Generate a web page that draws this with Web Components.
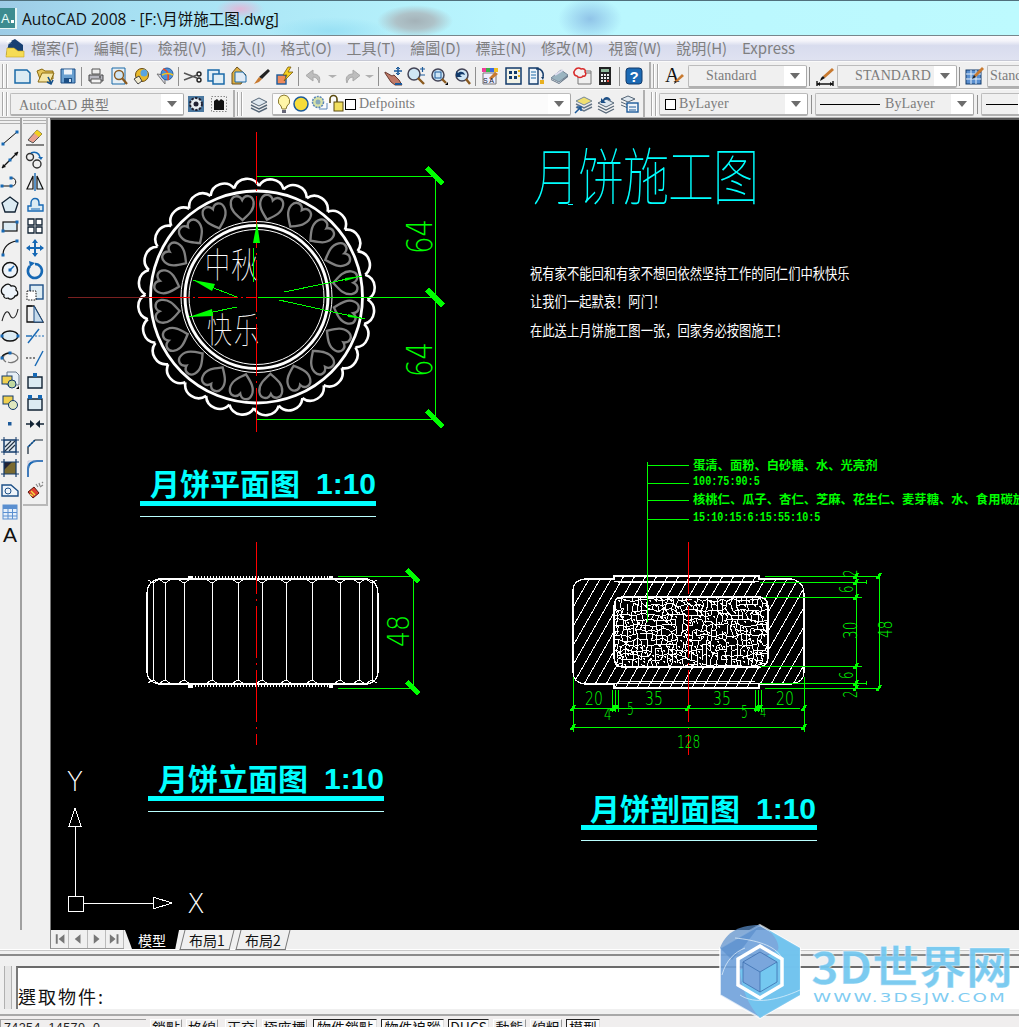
<!DOCTYPE html>
<html>
<head>
<meta charset="utf-8">
<title>AutoCAD 2008</title>
<style>
  html, body { margin: 0; height: 100%; overflow: hidden; background: #f0f0f0; }
</style>
</head>
<body>
<cad-app>
  <cad-titlebar>AutoCAD 2008 - [F:\月饼施工图.dwg]</cad-titlebar>
  <cad-menubar>
    <cad-menu>檔案(F)</cad-menu><cad-menu>編輯(E)</cad-menu><cad-menu>檢視(V)</cad-menu><cad-menu>插入(I)</cad-menu>
    <cad-menu>格式(O)</cad-menu><cad-menu>工具(T)</cad-menu><cad-menu>繪圖(D)</cad-menu><cad-menu>標註(N)</cad-menu>
    <cad-menu>修改(M)</cad-menu><cad-menu>視窗(W)</cad-menu><cad-menu>說明(H)</cad-menu><cad-menu>Express</cad-menu>
  </cad-menubar>
  <cad-toolbar pad="2">
    <tool-grip></tool-grip>
    <tool-icon name="new"></tool-icon><tool-icon name="open"></tool-icon><tool-icon name="save"></tool-icon><tool-sep></tool-sep>
    <tool-icon name="print"></tool-icon><tool-icon name="preview"></tool-icon><tool-icon name="publish"></tool-icon><tool-icon name="dwf"></tool-icon><tool-sep></tool-sep>
    <tool-icon name="cut"></tool-icon><tool-icon name="copy"></tool-icon><tool-icon name="paste"></tool-icon><tool-icon name="match"></tool-icon><tool-icon name="block"></tool-icon><tool-sep></tool-sep>
    <tool-icon name="undo" w="26"></tool-icon><tool-icon name="caret" w="12"></tool-icon><tool-icon name="redo" w="25"></tool-icon><tool-icon name="caret" w="12"></tool-icon><tool-sep></tool-sep>
    <tool-icon name="pan"></tool-icon><tool-icon name="zoomrt"></tool-icon><tool-icon name="zoomwin"></tool-icon><tool-icon name="zoomprev"></tool-icon><tool-sep></tool-sep>
    <tool-icon name="props"></tool-icon><tool-icon name="center"></tool-icon><tool-icon name="palette"></tool-icon><tool-icon name="sheet"></tool-icon><tool-icon name="markup"></tool-icon><tool-icon name="calc"></tool-icon><tool-sep w="6"></tool-sep>
    <tool-icon name="help" w="24"></tool-icon><tool-end></tool-end><tool-grip></tool-grip>
    <tool-icon name="textstyle" w="26"></tool-icon>
    <tool-combo w="119" pad="17" style="margin-left:1px">Standard</tool-combo><tool-sep></tool-sep>
    <tool-icon name="dimstyle" w="25"></tool-icon>
    <tool-combo w="120" pad="17">STANDARD</tool-combo><tool-sep w="4"></tool-sep>
    <tool-icon name="tablestyle" w="26"></tool-icon>
    <tool-combo w="60" pad="2">Standard</tool-combo>
  </cad-toolbar>
  <cad-toolbar h="29">
    <tool-grip></tool-grip>
    <tool-combo w="174">AutoCAD 典型</tool-combo>
    <tool-icon name="gear"></tool-icon><tool-icon name="wsblack"></tool-icon><tool-end></tool-end><tool-grip></tool-grip>
    <tool-icon name="layers" w="27"></tool-icon>
    <tool-combo w="299" light pad="3">
      <tool-icon name="bulb" w="16"></tool-icon><tool-icon name="sun" w="17"></tool-icon><tool-icon name="freeze" w="19"></tool-icon><tool-icon name="lock" w="17"></tool-icon><tool-swatch></tool-swatch>Defpoints
    </tool-combo>
    <tool-icon name="laymake"></tool-icon><tool-icon name="layprev"></tool-icon><tool-icon name="laystate"></tool-icon><tool-end></tool-end><tool-grip w="14"></tool-grip>
    <tool-combo w="149" pad="5"><tool-swatch></tool-swatch>ByLayer</tool-combo><tool-sep w="7"></tool-sep>
    <tool-combo w="159"><tool-rule len="60"></tool-rule>ByLayer</tool-combo><tool-sep w="7"></tool-sep>
    <tool-combo w="60"><tool-rule len="40"></tool-rule></tool-combo>
  </cad-toolbar>
  <cad-workspace>
    <cad-vbar slot="left">
      <tool-icon h="22" name="l_line"></tool-icon><tool-icon h="22" name="l_xline"></tool-icon><tool-icon h="22" name="l_pline"></tool-icon><tool-icon h="22" name="l_polygon"></tool-icon><tool-icon h="22" name="l_rect"></tool-icon>
      <tool-icon h="22" name="l_arc"></tool-icon><tool-icon h="22" name="l_circle"></tool-icon><tool-icon h="22" name="l_cloud"></tool-icon><tool-icon h="22" name="l_spline"></tool-icon><tool-icon h="22" name="l_ellipse"></tool-icon>
      <tool-icon h="22" name="l_ellarc"></tool-icon><tool-icon h="22" name="l_insert"></tool-icon><tool-icon h="22" name="l_mkblock"></tool-icon><tool-icon h="22" name="l_point"></tool-icon><tool-icon h="22" name="l_hatch"></tool-icon>
      <tool-icon h="22" name="l_gradient"></tool-icon><tool-icon h="22" name="l_region"></tool-icon><tool-icon h="22" name="l_table"></tool-icon><tool-icon h="22" name="l_text"></tool-icon>
    </cad-vbar>
    <cad-vbar slot="left" boxed>
      <tool-icon h="22" name="m_erase"></tool-icon><tool-icon h="22" name="m_copy"></tool-icon><tool-icon h="22" name="m_mirror"></tool-icon><tool-icon h="22" name="m_offset"></tool-icon><tool-icon h="22" name="m_array"></tool-icon>
      <tool-icon h="22" name="m_move"></tool-icon><tool-icon h="22" name="m_rotate"></tool-icon><tool-icon h="22" name="m_scale"></tool-icon><tool-icon h="22" name="m_stretch"></tool-icon><tool-icon h="22" name="m_trim"></tool-icon>
      <tool-icon h="22" name="m_extend"></tool-icon><tool-icon h="22" name="m_breakpt"></tool-icon><tool-icon h="22" name="m_break"></tool-icon><tool-icon h="22" name="m_join"></tool-icon><tool-icon h="22" name="m_chamfer"></tool-icon>
      <tool-icon h="22" name="m_fillet"></tool-icon><tool-icon h="22" name="m_explode"></tool-icon>
    </cad-vbar>
    <cad-drawing></cad-drawing>
  </cad-workspace>
  <cad-tabs>
    <cad-tab active>模型</cad-tab><cad-tab>布局1</cad-tab><cad-tab>布局2</cad-tab>
  </cad-tabs>
  <cad-command>選取物件:</cad-command>
  <cad-status coords="74254, 14570, 0">
    <cad-toggle w="32">鎖點</cad-toggle><cad-toggle w="32">格線</cad-toggle><cad-toggle w="32" style="margin-left:3px">正交</cad-toggle><cad-toggle w="45" style="margin-left:1px">極座標</cad-toggle>
    <cad-toggle w="64" on style="margin-left:2px">物件鎖點</cad-toggle><cad-toggle w="63" on>物件追蹤</cad-toggle><cad-toggle w="41" on>DUCS</cad-toggle>
    <cad-toggle w="33">動態</cad-toggle><cad-toggle w="32">線粗</cad-toggle><cad-toggle w="34" on>模型</cad-toggle>
  </cad-status>
  <cad-watermark></cad-watermark>
</cad-app>

<script>
const CJK = '"Noto Sans CJK TC", "Noto Sans CJK SC", sans-serif';
const BL = "#1668b4";

// 20x20 toolbar icons, stroke look follows the AutoCAD 2008 set
const nodes = (pts) => pts.map(([x, y]) => `<rect x="${x - 1.5}" y="${y - 1.5}" width="3" height="3" fill="${BL}"/>`).join("");
const ICONS = {
  new: `<path d="M3 4h12l3 3v10H3z" fill="#dcebf3" stroke="#1a6aa8" stroke-width="1.5"/>`,
  open: `<path d="M2 5l5-2 3 2h8v8H5z" fill="#e6c55a" stroke="#8a6a10"/><path d="M3 16l4-9h12l-4 9z" fill="#f5e6a6" stroke="#8a6a10"/><path d="M13 11l3 6m-4-1 4 2 2-4" stroke="#134f8a" stroke-width="1.6" fill="none"/>`,
  save: `<path d="M3 3h14v14H3z" fill="#6aa0d0" stroke="#1c4f86"/><rect x="6" y="3.5" width="8" height="5" fill="#eef4fa"/><rect x="6" y="12" width="8" height="5" fill="#1c4f86"/><rect x="11" y="13" width="2" height="3" fill="#cfe0f0"/>`,
  print: `<path d="M6 3h8v5H6z" fill="#eee" stroke="#555"/><path d="M3 9h14v6H3z" fill="#b8b8c0" stroke="#444"/><path d="M5 13h10v4H5z" fill="#f4f4f4" stroke="#555"/><circle cx="14" cy="11" r="1" fill="#555"/>`,
  preview: `<path d="M3 2h13v16H3z" fill="#e6eff5" stroke="#1a6aa8"/><circle cx="10" cy="9" r="4.5" fill="#cfe6f5" stroke="#8a5a20" stroke-width="1.4"/><path d="M13 12l5 6" stroke="#8a5a20" stroke-width="2.2"/>`,
  publish: `<circle cx="10" cy="9" r="6.5" fill="#e8b92a" stroke="#6a4a10"/><circle cx="12" cy="7" r="3.5" fill="#5aa5e0"/><path d="M2 13l5-3 3 5-4 3z" fill="#f0ead0" stroke="#444"/>`,
  dwf: `<path d="M2 8l8 10V9z" fill="#d8d8e4" stroke="#777"/><circle cx="12" cy="8" r="6" fill="#4a90d8" stroke="#2a5a9a"/><path d="M8 3c4 1 6 5 5 11" stroke="#e84a2a" stroke-width="1.6" fill="none"/><path d="M7 9c3-2 8-2 11 0" stroke="#f2c420" stroke-width="1.6" fill="none"/>`,
  cut: `<circle cx="16" cy="8" r="2" fill="none" stroke="#222" stroke-width="1.4"/><circle cx="16" cy="14" r="2" fill="none" stroke="#222" stroke-width="1.4"/><path d="M1 7l13 5M1 14l13-5" stroke="#555" stroke-width="1.4"/>`,
  copy: `<path d="M2 4h11v11H2z" fill="#e0eef5" stroke="#1a6aa8" stroke-width="1.5"/><path d="M7 8h11v10H7z" fill="#e0eef5" stroke="#1a6aa8" stroke-width="1.5"/>`,
  paste: `<path d="M8 1l9 8-5 9H3V7z" fill="#e0b040" stroke="#6a5020"/><path d="M6 6h8l3 4v6H6z" fill="#dfeaf5" stroke="#1a6aa8"/>`,
  match: `<path d="M16 3l2 2-8 8-3-2z" fill="#222"/><path d="M7 11l3 2-3 3-5 2z" fill="#c87a30"/>`,
  block: `<rect x="2" y="9" width="9" height="9" fill="#ef8a5a" stroke="#1a5a9a" stroke-width="1.4"/><path d="M13 1l-5 8h4l-3 6 9-9h-5l3-5z" fill="#f4d020" stroke="#7a5a10" stroke-width=".8"/>`,
  undo: `<path d="M15 17c2-5 0-9-6-9V4L2 9.500l7 5.500v-4c3 0 5 2 6 5.500z" fill="#bdbdbd" stroke="#a8a8a8"/>`,
  redo: `<path d="M5 17c-2-5 0-9 6-9V4l7 5.500-7 5.500v-4c-3 0-5 2-6 5.500z" fill="#bdbdbd" stroke="#a8a8a8"/>`,
  caret: `<path d="M5 9h9l-4.500 3z" fill="#b0b0b0"/>`,
  pan: `<path d="M2 6l7 4 2-1 5 5 3 5h-7l-4-3-6-9z" fill="#c07a68" stroke="#6a3a30"/><path d="M12 17h7v2h-7z" fill="#1c5a9a"/><path d="M15 1v8M11 5h8" stroke="#1c5a9a" stroke-width="1.6"/><path d="M13 3l2-2 2 2M13 7l2 2 2-2" stroke="#1c5a9a" fill="none"/>`,
  zoomrt: `<circle cx="8" cy="8" r="6" fill="#cfe6f5" stroke="#445" stroke-width="1.5"/><path d="M12 12l6 6" stroke="#8a5a20" stroke-width="2.4"/><path d="M14 3h5M16.500 1v5M14 9h5" stroke="#1c5a9a" stroke-width="1.2"/>`,
  zoomwin: `<circle cx="9" cy="9" r="6" fill="#cfe6f5" stroke="#445" stroke-width="1.5"/><rect x="6" y="6" width="6" height="6" fill="none" stroke="#1c5a9a"/><path d="M13 13l4 4" stroke="#8a5a20" stroke-width="2.4"/><path d="M16 19l3-3v3z" fill="#000"/>`,
  zoomprev: `<circle cx="10" cy="9" r="6" fill="#cfe6f5" stroke="#445" stroke-width="1.5"/><path d="M14 13l4 5" stroke="#8a5a20" stroke-width="2.400"/><path d="M13 9C12 5 8 5 6 7L4 5v6h6L8 9c1-1 3-1 5 0z" fill="#123a6a"/>`,
  props: `<path d="M2 2h15v4H2z" fill="#f03a9a"/><path d="M6 2h4v4H6z" fill="#3ab04a"/><path d="M10 2h4v4h-4z" fill="#3a6ae0"/><path d="M14 2h4v4h-4z" fill="#f0c020"/><path d="M3 7h13v11H3z" fill="#eef" stroke="#777"/><path d="M15 6l3 2-7 6-2-2z" fill="#c87a30"/><text x="3" y="17" font-size="7" font-family="Liberation Sans" fill="#123">S A</text>`,
  center: `<rect x="3" y="2" width="15" height="16" fill="#f2f2e6" stroke="#123a6a" stroke-width="1.5"/><path d="M6 5h3v3H6zM11 5h3v3h-3zM6 10h3v3H6zM11 10h3v3h-3z" fill="#123a6a"/><path d="M15 5h2M15 10h2" stroke="#e0b020" stroke-width="2"/>`,
  palette: `<path d="M3 2h9v16H3z" fill="#eef4fa" stroke="#123a6a" stroke-width="1.400"/><path d="M5 6h5M5 9h5M5 12h5" stroke="#1a6aa8"/><path d="M10 3c5-1 8 3 7 8" fill="none" stroke="#123a6a" stroke-width="1.500"/><path d="M15 11l3 0-1 3z" fill="#123a6a"/><rect x="14" y="14" width="4" height="4" fill="#e8b020"/>`,
  sheet: `<path d="M2 12L12 4l7 5-9 7z" fill="#9ab4c0" stroke="#789"/><path d="M2 13l8 4 9-8v2l-9 7-8-4z" fill="#678"/><path d="M6 9l8-5" stroke="#dde" stroke-width="2"/>`,
  markup: `<path d="M6 5h13v13H6z" fill="none" stroke="#777"/><path d="M8 7h11" stroke="#777"/><path d="M3 4c2-3 5-2 6-1 3-1 5 1 4 3 2 2 0 5-2 4-1 2-5 2-6 0-3 0-4-4-2-6z" fill="#f4f2f2" stroke="#d82a2a" stroke-width="1.500"/>`,
  calc: `<rect x="4" y="1" width="12" height="18" fill="#222"/><rect x="6" y="3" width="8" height="3" fill="#8fb89a"/><path d="M6 8h2v2H6zM9 8h2v2H9zM12 8h2v2h-2zM6 11h2v2H6zM9 11h2v2H9zM12 11h2v2h-2zM6 14h2v2H6zM9 14h2v2H9z" fill="#eee"/><path d="M12 14h2v2h-2z" fill="#e04030"/>`,
  help: `<rect x="2" y="2" width="16" height="16" rx="3" fill="#1c6ab4" stroke="#123a6a"/><text x="10" y="16" text-anchor="middle" font-family="Liberation Sans" font-weight="700" font-size="15" fill="#fff">?</text>`,
  textstyle: `<text x="1" y="16" font-family="Liberation Serif" font-size="20" fill="#111">A</text><path d="M18 8l2 2-7 6-2-1z" fill="#c87a30"/><path d="M11 15l2 1-3 2z" fill="#222"/>`,
  dimstyle: `<path d="M2 18h16M2 15v5M18 15v5" stroke="#111" stroke-width="1.400"/><path d="M2 18l3-2v4zM18 18l-3-2v4z" fill="#111"/><path d="M17 2l2 2-9 8-2-2z" fill="#c87a30"/><path d="M8 10l2 2-5 3 1-3z" fill="#111"/>`,
  tablestyle: `<rect x="2" y="4" width="15" height="14" fill="#5a8fd0" stroke="#123a6a"/><path d="M2 8h15M2 13h15M7 4v14M12 4v14" stroke="#e6f0fa"/><path d="M18 1l2 2-8 8-2-2z" fill="#c87a30"/><path d="M10 9l2 2-4 2z" fill="#222"/>`,
  gear: `<rect x="2" y="2" width="16" height="16" fill="#4a78a0"/><circle cx="10" cy="10" r="6" fill="#e8eef2" stroke="#223" stroke-width="2" stroke-dasharray="2.400 1.400"/><circle cx="10" cy="10" r="2.500" fill="#223"/>`,
  wsblack: `<rect x="2.500" y="2.500" width="15" height="15" fill="none" stroke="#888" stroke-dasharray="1.500 1.500"/><path d="M5 7l3-2 2 2 2-2 3 2v9H5z" fill="#111"/>`,
  layers: `<path d="M10 4l8 4-8 4-8-4z" fill="#dfe8f0" stroke="#567"/><path d="M2 11l8 4 8-4" fill="none" stroke="#567" stroke-width="1.400"/><path d="M2 14l8 4 8-4" fill="none" stroke="#567" stroke-width="1.400"/>`,
  bulb: `<path d="M8 1a6 6 0 0 1 3 11l-1 3H6l-1-3A6 6 0 0 1 8 1z" transform="translate(2 0)" fill="#fff6a8" stroke="#8a7a30"/><path d="M8 16h4v3H8z" fill="#667"/>`,
  sun: `<circle cx="10" cy="10" r="7" fill="#f6dc3a" stroke="#1c5a9a" stroke-width="1.500"/>`,
  freeze: `<circle cx="9" cy="8" r="5.500" fill="#d8e2a8" stroke="#5a86b8" stroke-width="1.500" stroke-dasharray="2 1"/><circle cx="9" cy="8" r="2.500" fill="#8ab"/><path d="M10 15h8V9" fill="none" stroke="#5a86b8"/>`,
  lock: `<path d="M3 9V5a3.500 3.500 0 0 1 7 0v4" fill="none" stroke="#5a4a10" stroke-width="1.600"/><rect x="7" y="8" width="9" height="9" fill="#f2e060" stroke="#5a4a10"/>`,
  laymake: `<path d="M11 3l8 4-8 4-8-4z" fill="#f0e070" stroke="#789"/><path d="M3 10l8 4 8-4M3 13l8 4 8-4" fill="none" stroke="#678" stroke-width="1.400"/><path d="M2 19l6-6M4 13h4v4" stroke="#1c5a9a" fill="none" stroke-width="1.500"/>`,
  layprev: `<path d="M10 5l8 4-8 4-8-4z" fill="#dfe8f0" stroke="#567"/><path d="M2 12l8 4 8-4M2 15l8 4 8-4" fill="none" stroke="#567" stroke-width="1.200"/><path d="M15 7C14 2 8 2 7 6L5 4v5h5L8 7c1-2 4-2 7 0z" fill="#1c4f86"/>`,
  laystate: `<path d="M9 2l7 3-7 3-7-3z" fill="#dfe8f0" stroke="#567"/><path d="M2 8l7 3M2 11l7 3" stroke="#567" fill="none"/><rect x="8" y="9" width="11" height="9" fill="#eef4fa" stroke="#1c5a9a" stroke-width="1.400"/><path d="M10 13h7M10 16h7" stroke="#1c5a9a"/>`,

  l_line: `<path d="M3 16L17 4" stroke="#111"/>${nodes([[3, 16], [17, 4]])}`,
  l_xline: `<path d="M2 18L18 2" stroke="#111" stroke-width="1.200"/><path d="M2 18l1-4 3 3zM18 2l-1 4-3-3z" fill="#111"/>${nodes([[10, 10]])}`,
  l_pline: `<path d="M2 14h10c5 0 5-8 0-8" fill="none" stroke="#111"/>${nodes([[2, 14], [11, 14], [11, 6]])}`,
  l_polygon: `<path d="M10 3l8 6-3 9H5L2 9z" fill="#dcebf3" stroke="#123" stroke-width="1.300"/>`,
  l_rect: `<rect x="3" y="6" width="14" height="9" fill="#dcebf3" stroke="#111" stroke-width="1.200"/>${nodes([[3, 15], [17, 6]])}`,
  l_arc: `<path d="M3 17C3 9 9 4 17 3" fill="none" stroke="#111" stroke-width="1.200"/>${nodes([[3, 17], [17, 3]])}`,
  l_circle: `<circle cx="10" cy="10" r="7.500" fill="#eef4fa" stroke="#111" stroke-width="1.400"/><path d="M10 10l4-4" stroke="#1668b4" stroke-width="1.400"/>${nodes([[10, 10]])}`,
  l_cloud: `<path d="M4 4c3-3 6-2 7 0 4-1 6 2 5 4 3 2 2 6-1 6-1 3-5 4-7 2-3 1-5-1-4-3-3-1-4-6 0-9z" fill="#eef4fa" stroke="#111" stroke-width="1.300"/>`,
  l_spline: `<path d="M2 17C5 6 8 6 10 11s6 4 8-6" fill="none" stroke="#222" stroke-width="1.100"/>`,
  l_ellipse: `<ellipse cx="10" cy="10" rx="8" ry="5" fill="#dcebf3" stroke="#111" stroke-width="1.400"/>${nodes([[2, 10], [18, 10]])}`,
  l_ellarc: `<path d="M6 14C0 10 5 5 10 5s10 4 7 7-7 3-9 2" fill="none" stroke="#777" stroke-width="1.300"/><path d="M2 11C1 7 6 5 10 5" fill="none" stroke="#111" stroke-width="1.300"/>${nodes([[2, 10], [10, 5]])}`,
  l_insert: `<path d="M7 2h9l3 3v10H7z" fill="#e6eef5" stroke="#678"/><rect x="2" y="6" width="10" height="8" fill="#f0d050" stroke="#123a6a"/><circle cx="12" cy="14" r="4" fill="#c0d8a0" stroke="#123a6a"/><path d="M16 19l3-3v3z" fill="#000"/>`,
  l_mkblock: `<rect x="3" y="4" width="10" height="8" fill="#f0d050" stroke="#123a6a"/><circle cx="13" cy="13" r="4.500" fill="#dfe8c0" stroke="#123a6a"/>`,
  l_point: `<rect x="8" y="8" width="3.500" height="3.500" fill="#1c5a9a"/>`,
  l_hatch: `<rect x="4" y="4" width="12" height="12" fill="#dfe8f0" stroke="#123a6a"/><path d="M5 11l6-6M5 15l10-10M9 15l6-6" stroke="#234" stroke-width="1.200"/><path d="M1 4h18M1 16h18M4 1v18M16 1v18" stroke="#123a6a"/>`,
  l_gradient: `<rect x="4" y="4" width="12" height="12" fill="#7a6a30"/><path d="M4 4h8L4 12z" fill="#223"/><path d="M1 4h18M1 16h18M4 1v18M16 1v18" stroke="#123a6a" stroke-width="1.200"/>`,
  l_region: `<path d="M2 5h9l7 6v5H2z" fill="#eef4fa" stroke="#1c4f86" stroke-width="1.400"/><circle cx="8" cy="11" r="3" fill="none" stroke="#1c4f86"/>`,
  l_table: `<rect x="3" y="3" width="14" height="14" fill="#e6f0fa" stroke="#5a8fd0"/><path d="M3 3h14v4H3z" fill="#5a8fd0"/><path d="M3 10.500h14M3 14h14M8 7v10M12.500 7v10" stroke="#5a8fd0"/>`,
  l_text: `<text x="10" y="18" text-anchor="middle" font-family="Liberation Sans" font-size="21" fill="#111">A</text>`,

  m_erase: `<path d="M12 2l5 4-9 9-5-3z" fill="#e8a090" stroke="#555"/><path d="M12 2l5 4-3 3-5-4z" fill="#f2d020"/><path d="M1 17h18" stroke="#111"/>`,
  m_copy: `<circle cx="5" cy="7" r="3.500" fill="none" stroke="#333" stroke-width="1.400"/><circle cx="12" cy="14" r="4" fill="none" stroke="#333" stroke-width="1.400"/><path d="M6 3c4-2 8 0 9 4" fill="none" stroke="#1668b4" stroke-width="1.400"/><path d="M13 7h5l-2 3z" fill="#1668b4"/>`,
  m_mirror: `<path d="M10 1v18" stroke="#1668b4" stroke-width="1.400"/><path d="M8 4v13H2z" fill="none" stroke="#111" stroke-width="1.200"/><path d="M12 4v13h6z" fill="#dcebf3" stroke="#111" stroke-width="1.200"/>`,
  m_offset: `<path d="M3 17v-5h3V9c0-6 8-6 8 0v2h4v6z" fill="#dcebf3" stroke="#1668b4" stroke-width="1.400"/><path d="M6 15h9" stroke="#1668b4"/>`,
  m_array: `<path d="M3 3h6v6H3zM11 3h6v6h-6zM3 11h6v6H3zM11 11h6v6h-6z" fill="#fff" stroke="#123" stroke-width="1.300"/>`,
  m_move: `<path d="M10 2v16M2 10h16" stroke="#1668b4" stroke-width="2"/><path d="M10 1l3 4H7zM10 19l3-4H7zM1 10l4-3v6zM19 10l-4-3v6z" fill="#1668b4"/>`,
  m_rotate: `<path d="M5 6a7 7 0 1 0 5-2" fill="none" stroke="#1668b4" stroke-width="2.600"/><path d="M4 1l6 2-5 4z" fill="#1668b4"/>`,
  m_scale: `<rect x="5" y="3" width="13" height="14" fill="#dcebf3" stroke="#1c4f86" stroke-width="1.400"/><path d="M2 9h9v9H2z" fill="#fff" stroke="#111" stroke-dasharray="1.500 1.200"/>`,
  m_stretch: `<path d="M2 2h7l9 16H2z" fill="none" stroke="#111" stroke-width="1.300"/><path d="M9 2l9 16H9z" fill="#c8dcec" stroke="#1c4f86"/><path d="M2 2h5M2 6" stroke="#111"/>`,
  m_trim: `<path d="M3 17L14 3" stroke="#1668b4" stroke-width="1.400"/><path d="M1 10h6" stroke="#1668b4" stroke-width="1.400"/><path d="M10 10h9" stroke="#1668b4" stroke-dasharray="2 1.500"/>`,
  m_extend: `<path d="M10 18L18 3" stroke="#1668b4" stroke-width="1.400"/><path d="M1 10h9" stroke="#111" stroke-dasharray="2 1.500"/>`,
  m_breakpt: `<path d="M3 18V7h14v11z" fill="#dcebf3" stroke="#123" stroke-width="1.400"/><rect x="8" y="3" width="4" height="4" fill="#1668b4"/>`,
  m_break: `<path d="M3 18V7h14v11z" fill="#dcebf3" stroke="#123" stroke-width="1.400"/><rect x="3" y="3" width="4" height="4" fill="#1668b4"/><rect x="13" y="3" width="4" height="4" fill="#1668b4"/>`,
  m_join: `<path d="M1 10h6M13 10h6" stroke="#123" stroke-width="1.600"/><path d="M9.500 10L5 6v8zM10.500 10L15 6v8z" fill="#123"/>`,
  m_chamfer: `<path d="M3 18V11l7-7h8" fill="none" stroke="#123" stroke-width="1.200"/><path d="M3 11l7-7" stroke="#1668b4" stroke-width="1.600" stroke-dasharray="1.500 1"/>`,
  m_fillet: `<path d="M3 19V11c0-5 4-8 9-8h6" fill="none" stroke="#1668b4" stroke-width="2"/><path d="M3 19V3h15" fill="none" stroke="#aac" stroke-width=".6"/>`,
  m_explode: `<path d="M3 12l6-5 5 6-6 5z" fill="#e04030" stroke="#5a1a10"/><path d="M5 14l3 2M6 11l4 4" stroke="#f0e040" stroke-width="1.400"/><path d="M14 3l1 3M18 5l-3 2M11 4l2 3M18 2l-1 1" stroke="#888" stroke-width="1.200"/>`,
};

class CadApp extends HTMLElement {
  constructor() {
    super();
    this.attachShadow({ mode: "open" }).innerHTML = `
      <style>:host{display:flex;flex-direction:column;position:relative;width:1019px;height:1027px;overflow:hidden;background:#f0f0f0}</style>
      <slot></slot>`;
  }
}

class CadTitlebar extends HTMLElement {
  constructor() {
    super();
    this.attachShadow({ mode: "open" }).innerHTML = `
      <style>
        :host{display:flex;align-items:center;flex:none;height:36px;box-sizing:border-box;border-top:1px solid #50707c;border-bottom:1px solid #77868c;
          background:
            radial-gradient(ellipse 38px 16px at 415px 20px,#a4b2b8 0,#aec2c8 50%,transparent 100%),
            radial-gradient(ellipse 32px 22px at 590px 18px,#90c4e8 0,transparent 100%),
            radial-gradient(ellipse 24px 10px at 240px 8px,#e0b8d8 0,transparent 100%),
            radial-gradient(ellipse 60px 14px at 330px 30px,#98e0f4 0,transparent 100%),
            linear-gradient(90deg,#9dcbe6 0,#a6dff2 120px,#b9f6fe 500px,#bdfafe 100%);
          font:15.500px "Open Sans",${CJK};color:#111}
        svg{width:17px;height:21px;margin-right:5px;flex:none}
      </style>
      <svg viewBox="0 0 17 21"><rect width="17" height="21" fill="#e8f6f4"/><rect x="0" y="0" width="15" height="20" fill="#3d8c90"/><text x="1" y="15" font-family="Liberation Sans" font-size="13" fill="#e8fffc">A</text><rect x="11" y="12" width="3" height="3" fill="#fff"/></svg>
      <slot></slot>`;
  }
}

class CadMenubar extends HTMLElement {
  constructor() {
    super();
    this.attachShadow({ mode: "open" }).innerHTML = `
      <style>
        :host{display:flex;align-items:center;flex:none;height:25px;gap:14.700px;box-sizing:border-box;padding-left:31px;position:relative;
          background:linear-gradient(#fbfbfe 0,#f4f4fa 20%,#d8dcee 40%,#dfe2f1 100%);border-bottom:1px solid #c6c8d4}
        svg{position:absolute;left:5px;top:2px;width:20px;height:20px}
      </style>
      <svg viewBox="0 0 20 20"><path d="M1 17l3-13 6-3 8 6v10z" fill="#173f73"/><path d="M1 19l1-9h7l4 3h6v6z" fill="#f6dc55" stroke="#c9a520" stroke-width=".6"/><path d="M4 1v5M1.500 3.500h5M2.300 1.800l3.400 3.400M5.700 1.800l-3.400 3.400" stroke="#fff"/></svg>
      <slot></slot>`;
  }
}

class CadMenu extends HTMLElement {
  constructor() {
    super();
    this.attachShadow({ mode: "open" }).innerHTML = `
      <style>:host{display:block;font:15px ${CJK};line-height:24px;color:#7f7f80;white-space:nowrap}</style><slot></slot>`;
  }
}

class CadToolbar extends HTMLElement {
  connectedCallback() {
    if (this.shadowRoot) return;
    const h = this.getAttribute("h") || 28;
    const pad = this.getAttribute("pad") || 1;
    this.attachShadow({ mode: "open" }).innerHTML = `
      <style>:host{display:flex;align-items:center;flex:none;height:${h}px;padding-top:${pad}px;overflow:hidden;background:#f0f0f0;box-sizing:border-box;border-bottom:1px solid #b4b4b4;border-top:1px solid #fafafa}</style><slot></slot>`;
  }
}

class ToolIcon extends HTMLElement {
  connectedCallback() {
    const w = this.getAttribute("w") || 23;
    const h = this.getAttribute("h") || 20;
    const name = this.getAttribute("name");
    if (this.shadowRoot) return;
    this.attachShadow({ mode: "open" }).innerHTML = `
      <style>:host{display:flex;align-items:center;justify-content:center;flex:none;width:${w}px;height:${h}px}svg{width:20px;height:20px;overflow:visible;flex:none}</style>
      <svg viewBox="0 0 20 20">${ICONS[name] || ""}</svg>`;
  }
}

class ToolSep extends HTMLElement {
  connectedCallback() {
    if (this.shadowRoot) return;
    const w = this.getAttribute("w") || 5;
    this.attachShadow({ mode: "open" }).innerHTML = `
      <style>:host{display:flex;justify-content:center;flex:none;width:${w}px;height:19px}i{width:1px;background:#8f8f8f}</style><i></i>`;
  }
}

class ToolEnd extends HTMLElement {
  constructor() {
    super();
    this.attachShadow({ mode: "open" }).innerHTML = `
      <style>:host{display:block;flex:none;width:5px;height:28px;box-sizing:border-box;border-right:2px solid #b0b0b0}</style>`;
  }
}

class ToolGrip extends HTMLElement {
  connectedCallback() {
    if (this.shadowRoot) return;
    const w = this.getAttribute("w") || 10;
    this.attachShadow({ mode: "open" }).innerHTML = `
      <style>:host{display:flex;justify-content:flex-end;gap:2px;box-sizing:border-box;padding-right:2px;flex:none;width:${w}px;height:24px}i{width:1px;background:#a8a8a8;border-right:1px solid #fff}</style><i></i><i></i>`;
  }
}

class ToolCombo extends HTMLElement {
  connectedCallback() {
    if (this.shadowRoot) return;
    const w = this.getAttribute("w");
    const pad = this.getAttribute("pad") || 8;
    const light = this.hasAttribute("light");
    this.attachShadow({ mode: "open" }).innerHTML = `
      <style>
        :host{display:flex;flex:none;width:${w}px;height:23px;box-sizing:border-box;border:1px solid #bcbcbc;border-right-color:#a8a8a8;border-bottom:2px solid #b0b0b0;border-radius:2px;background:#fff;overflow:hidden;
          font:14px "Liberation Serif",${CJK};color:#7c7c7c;letter-spacing:.1px}
        .t{flex:1;min-width:0;display:flex;align-items:center;gap:0;white-space:nowrap;overflow:hidden;background:${light ? "#fbfbfb" : "#f0f0f0"};padding-left:${pad}px;padding-top:1px}
        .b{flex:none;width:22px;display:flex;align-items:center;justify-content:center}
        .b svg{width:10px;height:6px}
      </style>
      <span class="t"><slot></slot></span>
      <span class="b"><svg viewBox="0 0 10 6"><path d="M0 0h10L5 6z" fill="#6c6c6c"/></svg></span>`;
  }
}

class ToolSwatch extends HTMLElement {
  constructor() {
    super();
    this.attachShadow({ mode: "open" }).innerHTML = `
      <style>:host{display:block;flex:none;width:9px;height:9px;border:1px solid #000;background:#fff;margin:0 3px 0 0}</style>`;
  }
}

class ToolRule extends HTMLElement {
  connectedCallback() {
    if (this.shadowRoot) return;
    const len = this.getAttribute("len") || 60;
    this.attachShadow({ mode: "open" }).innerHTML = `
      <style>:host{display:block;flex:none;width:${len}px;height:1px;background:#000;margin-right:5px;margin-left:-4px}</style>`;
  }
}

class CadWorkspace extends HTMLElement {
  constructor() {
    super();
    this.attachShadow({ mode: "open" }).innerHTML = `
      <style>
        :host{display:flex;flex:none;height:812px}
        .left{flex:none;width:50px;display:flex;align-items:flex-start;background:#f0f0f0}
      </style>
      <div class="left"><slot name="left"></slot></div>
      <slot></slot>`;
  }
}

class CadVbar extends HTMLElement {
  connectedCallback() {
    if (this.shadowRoot) return;
    const boxed = this.hasAttribute("boxed");
    this.attachShadow({ mode: "open" }).innerHTML = `
      <style>
        :host{display:flex;flex-direction:column;flex:none;box-sizing:border-box;
          ${boxed ? "width:25px;height:388px;margin-left:1px;border-right:2px solid #b8b8b8;border-bottom:2px solid #b8b8b8;align-items:center" : "width:22px;height:812px;border-right:2px solid #a0a0a0;align-items:center"}}
        .g{flex:none;width:100%;height:7px;box-sizing:border-box;margin-top:2px;border-top:1px solid #b0b0b0;position:relative}
        .g::after{content:"";position:absolute;left:0;right:0;top:2px;border-top:1px solid #b0b0b0}
      </style>
      <div class="g"></div><slot></slot>`;
  }
}

// the model space is a free canvas, every entity sits at its own coordinate
class CadDrawing extends HTMLElement {
  constructor() {
    super();
    this.attachShadow({ mode: "open" }).innerHTML = `
      <style>
        :host{display:block;flex:none;width:969px;height:812px;box-sizing:border-box;background:#000;border-top:2px solid #555;border-left:1px solid #777}
        svg{display:block;shape-rendering:crispEdges}
        text{shape-rendering:auto}
      </style>
      ${this.build()}`;
  }

  build() {
    const G = "#00ff00", W = "#ffffff", R = "#ff0000", C = "#00ffff";
    const dig = '"DejaVu Sans", sans-serif';
    const sc = '"Noto Sans CJK SC", sans-serif';
    const ln = (a, b, c, d, col = G, w = 1, extra = "") => `<line x1="${a}" y1="${b}" x2="${c}" y2="${d}" stroke="${col}" stroke-width="${w}" ${extra}/>`;
    const txt = (x, y, s, { size = 14, col = G, font = sc, weight = 400, rot = 0, sx = 1, sy = 1, ls = 0 } = {}) =>
      `<text transform="translate(${x} ${y}) rotate(${rot}) scale(${sx} ${sy})" font-family='${font}' font-weight="${weight}" font-size="${size}" fill="${col}" letter-spacing="${ls}">${s}</text>`;
    const center = (a, b, c, d) => ln(a, b, c, d, R, 1.5, 'stroke-dasharray="52 5 2 5"');
    const tick = (x, y, w = 5, l = 8) => ln(x - l, y - l, x + l, y + l, G, w);
    const smallTick = (x, y) => ln(x - 2, y + 3, x + 2, y - 3, G, 2.5);
    let s = "";

    // plan view
    const cx = 256.5, cy = 297;
    const N = 28;
    let sc_path = "";
    for (let i = 0; i < N; i++) {
      const a0 = ((i + 0.1) / N) * 2 * Math.PI, a1 = ((i + 1.1) / N) * 2 * Math.PI;
      sc_path += `M${(cx + 111 * Math.sin(a0)).toFixed(1)} ${(cy - 111 * Math.cos(a0)).toFixed(1)}A13.500 13.500 0 0 1 ${(cx + 111 * Math.sin(a1)).toFixed(1)} ${(cy - 111 * Math.cos(a1)).toFixed(1)}`;
    }
    s += `<g shape-rendering="auto"><path d="${sc_path}" fill="none" stroke="${W}" stroke-width="2.600"/>`;
    s += `<circle cx="${cx}" cy="${cy}" r="106" fill="none" stroke="${W}" stroke-width="2.800"/>`;
    for (let i = 0; i < 20; i++) {
      const a = ((i + 0.5) / 20) * 360, r = a * Math.PI / 180;
      const hx = cx + 91 * Math.sin(r), hy = cy - 91 * Math.cos(r);
      s += `<path transform="translate(${hx.toFixed(1)} ${hy.toFixed(1)}) rotate(${a + 8}) scale(.95 1)" d="M0 13C-6 8 -13 3 -12 -5C-11 -12 -3 -13 0 -7C3 -13 11 -12 12 -5C13 3 6 8 0 13Z" fill="none" stroke="#808080" stroke-width="2.400"/>`;
    }
    s += `<circle cx="${cx}" cy="${cy}" r="75.500" fill="none" stroke="${W}"/>`;
    s += `<circle cx="${cx}" cy="${cy}" r="71.500" fill="none" stroke="${W}" stroke-width="3"/>`;
    s += `<circle cx="${cx}" cy="${cy}" r="67.500" fill="none" stroke="${W}"/></g>`;
    s += txt(205, 278, "中", { size: 25, col: W, weight: 100, sy: 1.4 });
    s += txt(231, 278, "秋", { size: 27, col: W, weight: 100, sy: 1.3 });
    s += txt(207, 343, "快", { size: 25, col: W, weight: 100, sy: 1.4 });
    s += txt(234, 343, "乐", { size: 25, col: W, weight: 100, sy: 1.4 });
    s += ln(68, cy, 150, cy, "#7a2020") + ln(150, cy, cx, cy, R, 1, 'stroke-dasharray="40 3 2 3"');
    s += center(cx, 132, cx, 432);
    s += ln(cx + 1, cy, 435, cy) + ln(cx, 176, 435, 176) + ln(cx, 419, 435, 419) + ln(435, 176, 435, 419);
    s += tick(435, 176) + tick(435, 297.5) + tick(435, 419);
    s += txt(432, 254, "64", { size: 30, font: dig, weight: 200, rot: -90, sx: 0.92, sy: 1.17 });
    s += txt(432, 377, "64", { size: 30, font: dig, weight: 200, rot: -90, sx: 0.92, sy: 1.17 });
    s += ln(193, 280, 237, 297) + ln(189, 317, 237, 307) + ln(284, 292, 362, 276) + ln(279, 300, 365, 319);
    s += `<g fill="${G}" shape-rendering="auto"><path d="M193 280L215 284L212 291z"/><path d="M189 317L212 309L213 316z"/><path d="M362 276L345 278L345 281z"/><path d="M365 319L348 314L348 317z"/><path d="M257 222L260 243L253 243z"/></g>`;
    s += ln(254, 248, 253, 283);

    // title and note
    "月饼施工图".split("").forEach((ch, i) => {
      s += txt(533 + i * 45, 200, ch, { size: 46, col: C, weight: 100, sy: 1.35 });
    });
    s += ln(568, 204, 573, 204, C);
    const note = { size: 12.300, col: W, sy: 1.2 };
    s += txt(530, 279, "祝有家不能回和有家不想回依然坚持工作的同仁们中秋快乐", note);
    s += txt(530, 307, "让我们一起默哀\uFF01阿门\uFF01", note);
    s += txt(530, 336, "在此送上月饼施工图一张\uFF0C回家务必按图施工\uFF01", note);

    // view captions
    const caption = (x, y, label, ux, uy) =>
      txt(x, y, label, { size: 30, col: C, weight: 700 }) +
      txt(x + 166, y - 1, "1:10", { size: 30, col: C, weight: 700, font: '"Liberation Sans", sans-serif' }) +
      ln(ux, uy, ux + 236, uy, C, 5) + ln(ux, uy + 13, ux + 236, uy + 13, "#bff");
    s += caption(150, 495, "月饼平面图", 140, 503);
    s += caption(158, 790, "月饼立面图", 148, 798);
    s += caption(590, 820, "月饼剖面图", 581, 827);

    // elevation
    s += `<path d="M158 579H368Q378 582 378 594V672Q378 681 368 684H158Q147 681 147 672V594Q147 582 158 579Z" fill="none" stroke="${W}" stroke-width="1.200"/>`;
    [153, 165, 184, 212, 238, 262, 286, 312, 340, 359, 372].forEach((x) => {
      s += ln(x, 583, x, 680, W);
      s += `<path d="M${x - 5} 580L${x} 583L${x + 5} 580M${x - 5} 683L${x} 680L${x + 5} 683" fill="none" stroke="${W}"/>`;
    });
    for (const y of [577.5, 685.5]) {
      s += ln(192, y, 330, y, W, 3.5, 'stroke-dasharray="1 2"');
      s += ln(188, y, 193, y, W, 4) + ln(329, y, 333, y, W, 4);
    }
    s += ln(188, 579.5, 333, 579.5, W) + ln(188, 683.5, 333, 683.5, W);
    s += center(256.5, 542, 256.5, 745);
    s += ln(338, 576, 413, 576) + ln(338, 688, 413, 688) + ln(413, 576, 413, 688);
    s += tick(413, 576, 5, 6) + tick(413, 688, 5, 6);
    s += txt(409, 647, "48", { size: 28, font: dig, weight: 200, rot: -90, sx: 0.9, sy: 1.1 });

    // section
    const body = "M584 579H614V576H759V579H792Q804 582 804 594V672Q804 682 792 684H759V688H614V684H584Q573 682 573 672V590Q573 581 584 579Z";
    const fill = "M622 597H758Q768 597 768 607V657Q768 667 758 667H622Q614 667 614 657V607Q614 597 622 597Z";
    let hatch = "", net = "";
    for (let x = 520; x < 860; x += 11) hatch += `M${x} 700L${x + 80} 560`;
    s += `<defs><clipPath id="cb"><path d="${body}${fill}" clip-rule="evenodd"/></clipPath><clipPath id="cf"><path d="${fill}"/></clipPath></defs>`;
    s += `<path d="${hatch}" stroke="${W}" stroke-width="1" fill="none" clip-path="url(#cb)"/>`;
    s += `<path d="${body}" fill="none" stroke="${W}" stroke-width="1.200"/>`;
    s += ln(614, 581, 759, 581, W) + ln(618, 582, 755, 582, W) + ln(614, 683, 759, 683, W) + ln(618, 681, 755, 681, W);
    s += `<path d="${fill}" fill="#000" stroke="${W}" stroke-width="1.500"/>`;
    // porous filling, seeded so each run gives the same grain
    let seed = 20081;
    const rnd = () => (seed = (seed * 16807) % 2147483647) / 2147483647;
    const pts = [];
    const cols = 32, rows = 15;
    for (let i = 0; i <= cols; i++) {
      pts.push([]);
      for (let j = 0; j <= rows; j++) pts[i].push([612 + i * 5 + (rnd() - 0.5) * 3.5, 595 + j * 5 + (rnd() - 0.5) * 3.5]);
    }
    for (let i = 0; i <= cols; i++) for (let j = 0; j <= rows; j++) {
      const p = pts[i][j];
      if (i < cols && rnd() > 0.22) net += `M${p[0].toFixed(1)} ${p[1].toFixed(1)}L${pts[i + 1][j][0].toFixed(1)} ${pts[i + 1][j][1].toFixed(1)}`;
      if (j < rows && rnd() > 0.22) net += `M${p[0].toFixed(1)} ${p[1].toFixed(1)}L${pts[i][j + 1][0].toFixed(1)} ${pts[i][j + 1][1].toFixed(1)}`;
      if (rnd() > 0.55) net += `M${(p[0] + 1.5).toFixed(1)} ${(p[1] + 1.5).toFixed(1)}h1.500v1.500`;
    }
    s += `<path d="${net}" fill="none" stroke="${W}" stroke-width="1" clip-path="url(#cf)"/>`;
    s += center(688.5, 542, 688.5, 755);
    // section dimensions
    s += ln(573, 677, 573, 732) + ln(804, 677, 804, 732) + ln(573, 708, 800, 708) + ln(573, 727, 804, 727);
    for (const x of [612, 615, 618, 755, 758, 761]) s += ln(x, 690, x, 712);
    for (const x of [573, 613, 616, 688, 757, 760, 804]) s += smallTick(x, 708);
    for (const x of [573, 804]) s += smallTick(x, 727);
    s += ln(856, 576, 856, 688) + ln(879, 576, 879, 688);
    for (const [x, y, e] of [[765, 576, 880], [760, 582, 866], [763, 597, 862], [760, 666, 862], [760, 683, 866], [765, 688, 880]]) s += ln(x, y, e, y);
    for (const y of [576, 582, 597, 666, 683, 688]) s += smallTick(856, y);
    for (const y of [576, 688]) s += smallTick(879, y);
    const dn = { size: 20, font: dig, weight: 200 };
    s += txt(585, 705, "20", { ...dn, sx: 0.7 }) + txt(645, 705, "35", { ...dn, sx: 0.7 }) + txt(713, 705, "35", { ...dn, sx: 0.7 }) + txt(776, 705, "20", { ...dn, sx: 0.7 });
    s += txt(604, 720, "4", { ...dn, size: 15, sx: 0.8 }) + txt(627, 715, "5", { ...dn, size: 18, sx: 0.6 }) + txt(741, 718, "5", { ...dn, size: 18, sx: 0.6 }) + txt(760, 717, "4", { ...dn, size: 10 });
    s += txt(677, 748, "128", { ...dn, size: 18, sx: 0.68 });
    const rd = { ...dn, size: 19, rot: -90, sx: 0.62 };
    s += txt(857, 577, "2", rd) + txt(853, 593, "6", rd) + txt(857, 639, "30", { ...rd, sx: 0.72 }) + txt(853, 679, "6", rd) + txt(857, 698, "2", rd);
    s += txt(892, 638, "48", { ...rd, sx: 0.72 });
    s += ln(866, 580, 866, 584) + ln(866, 681, 866, 685);

    // leaders
    s += ln(647, 462, 647, 622);
    for (const y of [465, 483, 500, 519]) s += ln(647, y, 689, y);
    const lab = { size: 12.300, weight: 700 };
    const ratio = { size: 11.500, weight: 700, font: '"Liberation Mono", monospace', sx: 0.88, sy: 1.15 };
    s += txt(693, 470, "蛋清、面粉、白砂糖、水、光亮剂", lab);
    s += txt(693, 485, "100:75:90:5", ratio);
    s += txt(693, 504, "核桃仁、瓜子、杏仁、芝麻、花生仁、麦芽糖、水、食用碳放", lab);
    s += txt(693, 521, "15:10:15:6:15:55:10:5", ratio);

    // UCS icon
    s += ln(75, 826, 75, 896, W) + ln(83, 903, 153, 903, W);
    s += `<rect x="68" y="896" width="15" height="15" fill="none" stroke="${W}"/>`;
    s += `<path d="M75 808L81 826H69ZM172 903L153 897V909Z" fill="none" stroke="${W}"/>`;
    s += txt(67, 791, "Y", { size: 26, col: W, font: dig, weight: 200 });
    s += txt(187, 913, "X", { size: 26, col: W, font: dig, weight: 200 });

    return `<svg width="968" height="810" viewBox="51 120 968 810">${s}</svg>`;
  }
}

class CadTabs extends HTMLElement {
  constructor() {
    super();
    this.attachShadow({ mode: "open" }).innerHTML = `
      <style>
        :host{display:flex;align-items:stretch;flex:none;height:19px;padding-left:50px;background:#f0f0f0;border-bottom:1px solid #fff;box-shadow:0 1px 0 #c8c8c8}
        .nav{display:flex;width:74px;box-sizing:border-box;border-left:1px solid #888;border-bottom:1px solid #999}
        .nav svg{width:18.500px;height:18px;border-right:1px solid #bbb;box-sizing:border-box}
      </style>
      <div class="nav">
        <svg viewBox="0 0 18 18"><path d="M5 4h2v10H5zM14 4v10L8 9z" fill="#777"/></svg>
        <svg viewBox="0 0 18 18"><path d="M12 4v10L6 9z" fill="#777"/></svg>
        <svg viewBox="0 0 18 18"><path d="M6 4v10l6-5z" fill="#777"/></svg>
        <svg viewBox="0 0 18 18"><path d="M4 4v10l6-5zM11 4h2v10h-2z" fill="#777"/></svg>
      </div>
      <slot></slot>`;
  }
}

class CadTab extends HTMLElement {
  connectedCallback() {
    if (this.shadowRoot) return;
    const active = this.hasAttribute("active");
    this.attachShadow({ mode: "open" }).innerHTML = `
      <style>
        :host{display:flex;align-items:center;justify-content:center;flex:none;position:relative;z-index:0;width:${active ? 54 : 56}px;margin-left:${active ? 1 : 0}px;
          font:14px ${CJK};color:${active ? "#fff" : "#111"}}
        :host::before{content:"";position:absolute;z-index:-1;
          ${active
            ? "inset:0;background:#000;clip-path:polygon(0 0,100% 0,93% 100%,13% 100%)"
            : "inset:0 3px -1px 3px;transform:skewX(-14deg);background:#f0f0f0;border:1px solid #777;border-top:none"}}
      </style><slot></slot>`;
  }
}

class CadCommand extends HTMLElement {
  constructor() {
    super();
    this.attachShadow({ mode: "open" }).innerHTML = `
      <style>
        :host{display:flex;flex:none;height:60px;box-sizing:border-box;padding-top:10px;padding-left:4px;background:#f0f0f0;border-top:2px solid #8a8a8a;position:relative;margin-top:4px}
        .grip{flex:none;width:6px;margin-right:4px;border-left:1px solid #b0b0b0;border-right:1px solid #b0b0b0;background:#e6e6e6;height:43px}
        .box{flex:1;height:43px;box-sizing:border-box;background:#fff;border-top:2px solid #6a6a6a;border-left:2px solid #7a7a7a;display:flex;align-items:flex-end;padding-bottom:2px;
          font:18px ${CJK};letter-spacing:2px;color:#111;line-height:22px}
      </style>
      <div class="grip"></div><div class="box"><span><slot></slot></span></div>`;
  }
}

class CadStatus extends HTMLElement {
  connectedCallback() {
    if (this.shadowRoot) return;
    const coords = this.getAttribute("coords");
    this.attachShadow({ mode: "open" }).innerHTML = `
      <style>
        :host{display:flex;flex:none;gap:4px;height:15px;padding-top:3px;box-sizing:content-box;background:#f0eeee;border-top:2px solid #a8a8a8;overflow:hidden}
        .c{flex:none;width:146px;padding-left:3px;box-sizing:border-box;margin-right:0;border-top:1px solid #a0a0a0;border-left:1px solid #a0a0a0;font:12.500px "Liberation Sans",sans-serif;letter-spacing:.4px;line-height:17px;color:#222}
      </style>
      <div class="c">${coords}</div><slot></slot>`;
  }
}

class CadToggle extends HTMLElement {
  connectedCallback() {
    if (this.shadowRoot) return;
    const on = this.hasAttribute("on");
    this.attachShadow({ mode: "open" }).innerHTML = `
      <style>
        :host{display:block;flex:none;width:${this.getAttribute("w")}px;height:24px;box-sizing:border-box;text-align:center;
          font:14px ${CJK};line-height:15px;color:#111;white-space:nowrap;overflow:hidden;
          border:1px solid ${on ? "#222" : "#fff"};border-right-color:${on ? "#ddd" : "#999"};background:${on ? "#fbfbfb" : "#f0f0f0"}}
      </style><slot></slot>`;
  }
}

class CadWatermark extends HTMLElement {
  constructor() {
    super();
    this.attachShadow({ mode: "open" }).innerHTML = `
      <style>:host{position:absolute;left:715px;top:920px;width:304px;height:105px;pointer-events:none}svg{display:block}</style>
      <svg width="304" height="105" viewBox="715 920 304 105">
        <path d="M760 925L800 948V995L760 1018L720 995V948Z" fill="#6fa1da" fill-opacity=".9" stroke="#fff" stroke-opacity=".7" stroke-width="2"/>
        <path d="M760 925L800 948V995L760 1018C748 1005 742 990 740 970L778 950C780 945 775 932 760 925Z" fill="#72c7f0" fill-opacity=".9"/>
        <path d="M760 925C735 925 725 935 720 948L732 960L745 945Z" fill="#5a8fcc" fill-opacity=".7"/>
        <path d="M735 938C755 940 775 945 782 958M722 975C726 960 735 952 745 948M740 995C755 1005 778 1000 800 990" fill="none" stroke="#e8f4fc" stroke-opacity=".7"/>
        <path d="M760 946L782 959V985L760 998L738 985V959Z" fill="none" stroke="#fff" stroke-width="3.500"/>
        <path d="M760 952L777 962L760 972L743 962Z" fill="#7aa6dc"/>
        <path d="M743 962L760 972V992L743 982Z" fill="#79a5dc"/>
        <path d="M777 962L760 972V992L777 982Z" fill="#74c8f0"/>
        <path d="M760 952L777 962L760 972L743 962ZM743 962V982L760 992L777 982V962M760 972V992" fill="none" stroke="#3d6fae" stroke-width=".8"/>
        <text x="811" y="984" font-family="'Noto Sans CJK SC',sans-serif" font-weight="700" font-size="45" textLength="202" lengthAdjust="spacingAndGlyphs" fill="#74c8f0" fill-opacity=".95" stroke="#ffffff" stroke-opacity=".5" stroke-width=".8">3D世界网</text>
        <text x="813" y="1002" font-family="'DejaVu Sans',sans-serif" font-size="12.500" textLength="194" lengthAdjust="spacingAndGlyphs" letter-spacing="1.500" fill="#80ccf2">WWW.3DSJW.COM</text>
      </svg>`;
  }
}

customElements.define("cad-app", CadApp);
customElements.define("cad-titlebar", CadTitlebar);
customElements.define("cad-menubar", CadMenubar);
customElements.define("cad-menu", CadMenu);
customElements.define("cad-toolbar", CadToolbar);
customElements.define("tool-icon", ToolIcon);
customElements.define("tool-sep", ToolSep);
customElements.define("tool-end", ToolEnd);
customElements.define("tool-grip", ToolGrip);
customElements.define("tool-combo", ToolCombo);
customElements.define("tool-swatch", ToolSwatch);
customElements.define("tool-rule", ToolRule);
customElements.define("cad-workspace", CadWorkspace);
customElements.define("cad-vbar", CadVbar);
customElements.define("cad-drawing", CadDrawing);
customElements.define("cad-tabs", CadTabs);
customElements.define("cad-tab", CadTab);
customElements.define("cad-command", CadCommand);
customElements.define("cad-status", CadStatus);
customElements.define("cad-toggle", CadToggle);
customElements.define("cad-watermark", CadWatermark);
</script>
</body>
</html>
